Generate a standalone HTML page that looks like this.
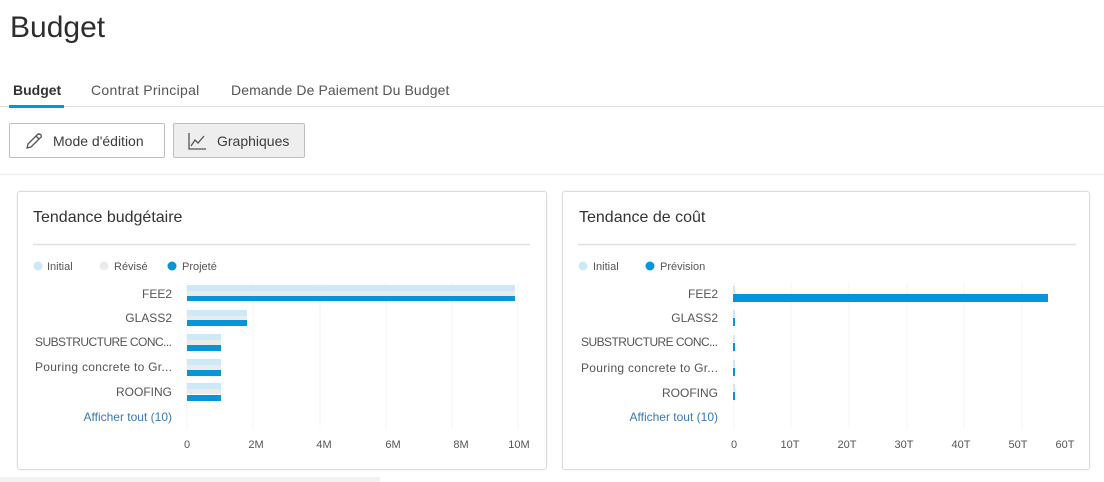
<!DOCTYPE html>
<html><head><meta charset="utf-8"><style>
*{margin:0;padding:0;box-sizing:border-box}
body{width:1104px;height:482px;background:#fff;font-family:"Liberation Sans",sans-serif;position:relative;overflow:hidden;color:#3c3c3c}
.a{position:absolute;white-space:nowrap}
.btn{position:absolute;border:1px solid #bfbfbf;border-radius:2px;height:35px;font-size:14px;color:#3c3c3c;display:flex;align-items:center}
.card{position:absolute;border:1px solid #dcdcdc;border-radius:3px;box-shadow:0 0 2px rgba(0,0,0,.08);background:#fff}
</style></head><body>
<div class="a" style="left:10px;top:11px;font-size:30px;color:#2d2d2d">Budget</div>
<div class="a" style="left:13px;top:82px;font-size:14px;font-weight:bold;color:#333">Budget</div>
<div class="a" style="left:91px;top:82px;font-size:14px;color:#555;letter-spacing:0.3px">Contrat Principal</div>
<div class="a" style="left:231px;top:82px;font-size:14px;color:#555;letter-spacing:0.1px">Demande De Paiement Du Budget</div>
<div class="a" style="left:0;top:106px;width:1104px;height:1px;background:#e0e0e0"></div>
<div class="a" style="left:9px;top:105px;width:55px;height:3px;background:#0696d7"></div>
<div class="btn" style="left:9px;top:123px;width:156px;background:#fff">
<svg style="margin-left:14px" width="20" height="20" viewBox="0 0 20 20"><path d="M3 17 L4 13 L13 4 Q15 2 17 4 Q18 6 16 7 L7 16 Z M12 5 L15 8" fill="none" stroke="#555" stroke-width="1.3"/></svg>
<span style="margin-left:9px">Mode d'édition</span></div>
<div class="btn" style="left:173px;top:123px;width:132px;background:#eeeeee">
<svg style="margin-left:13px" width="20" height="20" viewBox="0 0 20 20"><path d="M2 2 V18 H19 M4 15 L8 9 L11 12 L17 5" fill="none" stroke="#555" stroke-width="1.3"/></svg>
<span style="margin-left:10px">Graphiques</span></div>
<div class="a" style="left:0;top:174px;width:1104px;height:1px;background:#ececec"></div>

<div class="card" style="left:17px;top:191px;width:530px;height:279px"></div>
<div class="card" style="left:562px;top:191px;width:528px;height:279px"></div>

<svg class="a" style="left:0;top:0" width="1104" height="482" font-family="Liberation Sans, sans-serif">
<text x="33" y="222" font-size="16" fill="#333">Tendance budgétaire</text>
<line x1="33" y1="244.5" x2="530" y2="244.5" stroke="#e0e0e0" stroke-width="1.5"/>
<g font-size="11" fill="#555">
<circle cx="38" cy="266" r="4.5" fill="#cde8f6"/><text x="47" y="270">Initial</text>
<circle cx="104" cy="266" r="4.5" fill="#ebebeb"/><text x="114" y="270">Révisé</text>
<circle cx="172" cy="266" r="4.5" fill="#0696d7"/><text x="182" y="270">Projeté</text>
</g>
<g stroke="#eaeaea" stroke-dasharray="1 1">
<line x1="187" y1="283" x2="187" y2="428"/><line x1="253" y1="283" x2="253" y2="428"/><line x1="320" y1="283" x2="320" y2="428"/><line x1="386" y1="283" x2="386" y2="428"/><line x1="452" y1="283" x2="452" y2="428"/><line x1="518" y1="283" x2="518" y2="428"/>
</g>
<g>
<rect x="187" y="285" width="328" height="6" fill="#cde8f6"/><rect x="187" y="291" width="328" height="5" fill="#ebebeb"/><rect x="187" y="296" width="328" height="5" fill="#0696d7"/>
<rect x="187" y="310" width="60" height="6" fill="#cde8f6"/><rect x="187" y="316" width="60" height="4" fill="#ebebeb"/><rect x="187" y="320" width="60" height="6" fill="#0696d7"/>
<rect x="187" y="334" width="34" height="6" fill="#cde8f6"/><rect x="187" y="340" width="34" height="5" fill="#ebebeb"/><rect x="187" y="345" width="34" height="6" fill="#0696d7"/>
<rect x="187" y="359" width="34" height="6" fill="#cde8f6"/><rect x="187" y="365" width="34" height="5" fill="#ebebeb"/><rect x="187" y="370" width="34" height="6" fill="#0696d7"/>
<rect x="187" y="383" width="34" height="6" fill="#cde8f6"/><rect x="187" y="389" width="34" height="5" fill="#ebebeb"/><rect x="187" y="395" width="34" height="6" fill="#0696d7"/>
</g>
<g font-size="12" fill="#555" text-anchor="end">
<text x="172" y="298">FEE2</text><text x="172" y="322">GLASS2</text><text x="172" y="346" textLength="137">SUBSTRUCTURE CONC...</text><text x="172" y="371" textLength="137">Pouring concrete to Gr...</text><text x="172" y="396">ROOFING</text>
<text x="172" y="421" fill="#3a78b5">Afficher tout (10)</text>
</g>
<g font-size="11" fill="#555" text-anchor="middle">
<text x="187" y="448">0</text><text x="256" y="448">2M</text><text x="324" y="448">4M</text><text x="393" y="448">6M</text><text x="461" y="448">8M</text><text x="519" y="448">10M</text>
</g>

<text x="579" y="222" font-size="16" fill="#333">Tendance de coût</text>
<line x1="578" y1="244.5" x2="1076" y2="244.5" stroke="#e0e0e0" stroke-width="1.5"/>
<g font-size="11" fill="#555">
<circle cx="583" cy="266" r="4.5" fill="#cde8f6"/><text x="593" y="270">Initial</text>
<circle cx="650" cy="266" r="4.5" fill="#0696d7"/><text x="660" y="270">Prévision</text>
</g>
<g stroke="#eaeaea" stroke-dasharray="1 1">
<line x1="734" y1="283" x2="734" y2="428"/><line x1="791" y1="283" x2="791" y2="428"/><line x1="849" y1="283" x2="849" y2="428"/><line x1="907" y1="283" x2="907" y2="428"/><line x1="964" y1="283" x2="964" y2="428"/><line x1="1022" y1="283" x2="1022" y2="428"/>
</g>
<g>
<rect x="733" y="286" width="2" height="7" fill="#cde8f6"/><rect x="733" y="294" width="315" height="8" fill="#0696d7"/>
<rect x="733" y="310" width="2" height="7" fill="#cde8f6"/><rect x="733" y="318" width="2" height="8" fill="#0696d7"/>
<rect x="733" y="335" width="2" height="7" fill="#cde8f6"/><rect x="733" y="343" width="2" height="8" fill="#0696d7"/>
<rect x="733" y="360" width="2" height="7" fill="#cde8f6"/><rect x="733" y="368" width="2" height="8" fill="#0696d7"/>
<rect x="733" y="384" width="2" height="7" fill="#cde8f6"/><rect x="733" y="392" width="2" height="8" fill="#0696d7"/>
</g>
<g font-size="12" fill="#555" text-anchor="end">
<text x="718" y="298">FEE2</text><text x="718" y="322">GLASS2</text><text x="718" y="346" textLength="137">SUBSTRUCTURE CONC...</text><text x="718" y="372" textLength="137">Pouring concrete to Gr...</text><text x="718" y="397">ROOFING</text>
<text x="718" y="421" fill="#3a78b5">Afficher tout (10)</text>
</g>
<g font-size="11" fill="#555" text-anchor="middle">
<text x="734" y="448">0</text><text x="790" y="448">10T</text><text x="847" y="448">20T</text><text x="904" y="448">30T</text><text x="961" y="448">40T</text><text x="1018" y="448">50T</text><text x="1065" y="448">60T</text>
</g>
</svg>
<div class="a" style="left:0;top:477px;width:380px;height:5px;background:#f2f2f2"></div>
</body></html>
